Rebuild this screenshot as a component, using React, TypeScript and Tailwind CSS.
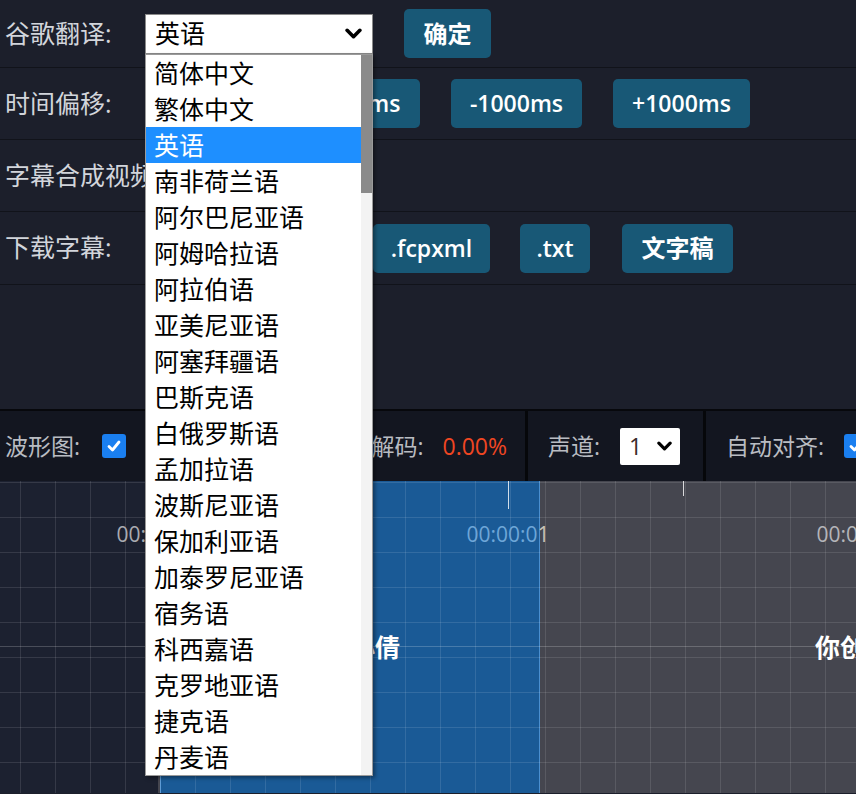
import { ReactNode } from "react";

const LANGS = [
  "简体中文",
  "繁体中文",
  "英语",
  "南非荷兰语",
  "阿尔巴尼亚语",
  "阿姆哈拉语",
  "阿拉伯语",
  "亚美尼亚语",
  "阿塞拜疆语",
  "巴斯克语",
  "白俄罗斯语",
  "孟加拉语",
  "波斯尼亚语",
  "保加利亚语",
  "加泰罗尼亚语",
  "宿务语",
  "科西嘉语",
  "克罗地亚语",
  "捷克语",
  "丹麦语",
];

function Chevron({ className }: { className?: string }) {
  return (
    <svg viewBox="0 0 16 10" className={className} fill="none">
      <polyline points="2,2 8,8 14,2" stroke="#000" strokeWidth="3.4" strokeLinecap="round" strokeLinejoin="round" />
    </svg>
  );
}

function Check() {
  return (
    <span className="flex h-6 w-6 shrink-0 items-center justify-center rounded-[3px] bg-[#1a7ff0]">
      <svg viewBox="0 0 16 16" className="h-4 w-4" fill="none">
        <polyline points="3,8.5 6.5,12 13,4" stroke="#fff" strokeWidth="2.8" strokeLinecap="round" strokeLinejoin="round" />
      </svg>
    </span>
  );
}

// fixed-width buttons, sized from the screenshot
function Btn({ children, w, cjk }: { children: ReactNode; w: string; cjk?: boolean }) {
  return (
    <button
      className={`h-[49px] shrink-0 whitespace-nowrap rounded-[5px] bg-[#185876] font-semibold leading-none text-white ${w} ${
        cjk ? "text-[24px]" : "text-[23px]"
      }`}
    >
      {children}
    </button>
  );
}

function Row({ label, h, gap = "gap-[30px]", children }: { label: string; h: string; gap?: string; children?: ReactNode }) {
  return (
    <div className={`flex items-center border-b border-[#11131a] ${h}`}>
      <div className="w-[145px] shrink-0 whitespace-nowrap pl-[5px] text-[25px] text-[#d2d5db]">{label}</div>
      <div className={`flex items-center ${gap}`}>{children}</div>
    </div>
  );
}

export default function App() {
  return (
    <div className="relative h-[794px] w-[856px] overflow-hidden bg-[#1c1f2b] font-['Open_Sans','Noto_Sans_CJK_SC',sans-serif]">
      {/* settings rows */}
      <Row label="谷歌翻译:" h="h-[68px]" gap="gap-[31px]">
        <div className="flex h-10 w-[228px] items-center justify-between border border-[#8a8a8a] bg-white pl-[9px] pr-[10px] text-[25px] text-black">
          <span>英语</span>
          <Chevron className="h-[11px] w-[17px]" />
        </div>
        <Btn w="w-[87px]" cjk>
          确定
        </Btn>
      </Row>
      <Row label="时间偏移:" h="h-[72px]" gap="gap-[31px]">
        <Btn w="w-[119px]">-100ms</Btn>
        <Btn w="w-[125px]">+100ms</Btn>
        <Btn w="w-[131px]">-1000ms</Btn>
        <Btn w="w-[137px]">+1000ms</Btn>
      </Row>
      <Row label="字幕合成视频:" h="h-[72px]" />
      <Row label="下载字幕:" h="h-[73px]">
        <Btn w="w-[84px]">.srt</Btn>
        <Btn w="w-[84px]">.ass</Btn>
        <Btn w="w-[117px]">.fcpxml</Btn>
        <Btn w="w-[70px]">.txt</Btn>
        <Btn w="w-[111px] ml-[2px]" cjk>
          文字稿
        </Btn>
      </Row>

      <div className="h-[124px]" />

      {/* toolbar */}
      <div className="flex h-[72px] items-center overflow-hidden border-t-2 border-[#07080c] bg-[#131620] text-[23px] text-[#b9bcc2]">
        <div className="flex h-full w-[150px] shrink-0 items-center gap-[22px] border-r-[3px] border-[#06070a] pl-[5px]">
          <span>波形图:</span>
          <Check />
        </div>
        <div className="flex h-full w-[164px] shrink-0 items-center gap-5 border-r-[3px] border-[#06070a] pl-5">
          <span>频谱图:</span>
          <Check />
        </div>
        <div className="flex h-full w-[214px] shrink-0 items-center justify-end gap-[19px] border-r-[3px] border-[#06070a] pr-[18px]">
          <span>音频解码:</span>
          <span className="text-[#f04622]">0.00%</span>
        </div>
        <div className="flex h-full w-[178px] shrink-0 items-center gap-5 border-r-[3px] border-[#06070a] px-5">
          <span>声道:</span>
          <div className="flex h-[37px] w-[60px] shrink-0 items-center justify-between rounded-[2px] bg-white pl-[9px] pr-[8px] text-[#3a2a2a]">
            <span>1</span>
            <Chevron className="h-[10px] w-[15px]" />
          </div>
        </div>
        <div className="flex h-full shrink-0 items-center gap-5 pl-5">
          <span className="whitespace-nowrap">自动对齐:</span>
          <Check />
        </div>
      </div>

      {/* timeline */}
      <div className="relative flex h-[312px]">
        <div className="w-[158px] bg-[#1c2130]" />
        <div className="flex-1 bg-[#45464f]" />

        {/* subtitle block */}
        <div className="absolute inset-y-0 left-[160px] w-[380px] border-x border-[#4a8fd0] bg-[#1a5a96]" />

        {/* grid */}
        <div className="absolute inset-0 bg-[linear-gradient(to_right,rgba(255,255,255,0.11)_1px,transparent_1px),linear-gradient(to_bottom,rgba(255,255,255,0.11)_1px,transparent_1px)] bg-[size:35px_35px] bg-[position:20px_1px]" />
        <div className="absolute inset-x-0 top-[165px] h-px bg-white/20" />

        {/* ticks */}
        <div className="absolute left-[158px] top-0 h-[28px] w-px bg-white/80" />
        <div className="absolute left-[333px] top-0 h-[15px] w-px bg-white/80" />
        <div className="absolute left-[508px] top-0 h-[28px] w-px bg-white/80" />
        <div className="absolute left-[683px] top-0 h-[15px] w-px bg-white/80" />

        {/* time labels */}
        <div className="absolute left-[116px] top-[40px] w-[84px] text-center text-[21px] leading-[26px] text-[#a9abb0]">00:00:00</div>
        <div className="absolute left-[466px] top-[40px] w-[84px] text-center text-[21px] leading-[26px]">
          <span className="text-[#6ea6d8]">00:00:0</span>
          <span className="text-[#c9c3b6]">1</span>
        </div>
        <div className="absolute left-[816px] top-[40px] w-[84px] text-center text-[21px] leading-[26px] text-[#b4b5b9]">00:00:02</div>

        {/* subtitle text */}
        <div className="absolute left-[160px] top-[148px] w-[380px] text-center text-[25px] font-bold text-white">我是小倩</div>
        <div className="absolute left-[815px] top-[148px] whitespace-nowrap text-[25px] font-bold text-white">你创建的</div>
      </div>

      {/* open dropdown list */}
      <div className="absolute left-[145px] top-[54px] flex h-[722px] w-[228px] border border-[#9a9a9a] bg-white shadow-[2px_2px_4px_rgba(0,0,0,0.4)]">
        <ul className="flex-1">
          {LANGS.map((l) => (
            <li
              key={l}
              className={`flex h-9 items-center pl-[8px] text-[25px] leading-none ${
                l === "英语" ? "bg-[#1e8fff] text-white" : "text-black"
              }`}
            >
              {l}
            </li>
          ))}
        </ul>
        <div className="w-[11px] bg-[#f3f3f3]">
          <div className="h-[138px] bg-[#8a8a8a]" />
        </div>
      </div>
    </div>
  );
}
